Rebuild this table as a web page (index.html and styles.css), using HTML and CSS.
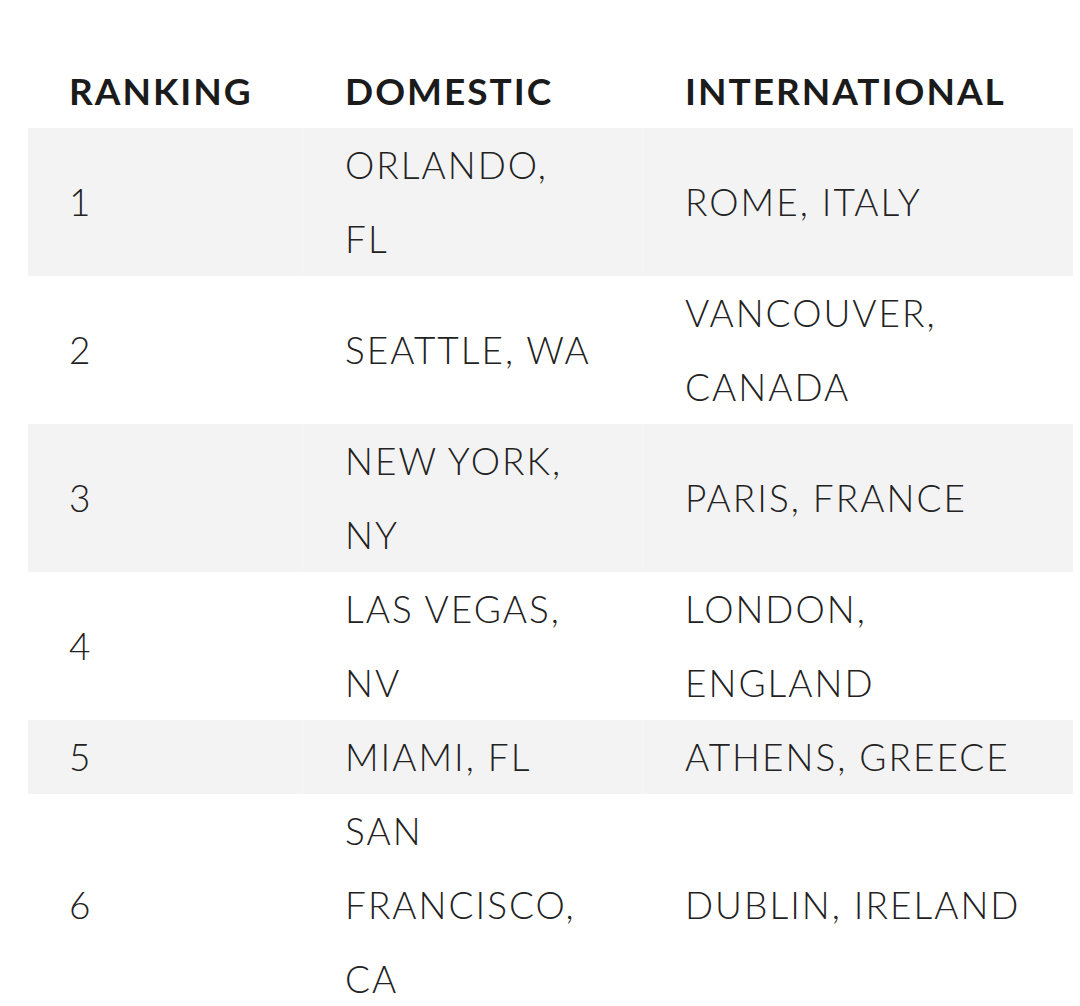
FILE: index.html
```html
<!DOCTYPE html>
<html>
<head>
<meta charset="utf-8">
<link rel="stylesheet" href="styles.css">
</head>
<body>
<div class="wrap">
<table class="rank">
  <thead>
    <tr><th class="c1">RANKING</th><th class="c2">DOMESTIC</th><th class="c3">INTERNATIONAL</th></tr>
  </thead>
  <tbody>
    <tr class="alt"><td>1</td><td>ORLANDO, FL</td><td>ROME, ITALY</td></tr>
    <tr><td>2</td><td>SEATTLE, WA</td><td>VANCOUVER, CANADA</td></tr>
    <tr class="alt"><td>3</td><td>NEW YORK, NY</td><td>PARIS, FRANCE</td></tr>
    <tr><td>4</td><td>LAS VEGAS, NV</td><td>LONDON, ENGLAND</td></tr>
    <tr class="alt"><td>5</td><td>MIAMI, FL</td><td>ATHENS, GREECE</td></tr>
    <tr><td>6</td><td>SAN FRANCISCO, CA</td><td>DUBLIN, IRELAND</td></tr>
  </tbody>
</table>
</div>
</body>
</html>
```

FILE: styles.css
```css
html, body {
  margin: 0;
  padding: 0;
  background: #ffffff;
}
.wrap {
  padding: 54px 7px 0 28px;
}
.rank {
  width: 1045px;
  border-collapse: collapse;
  table-layout: fixed;
  font-family: "Lato", "Liberation Sans", sans-serif;
  font-size: 37px;
  line-height: 74px;
  color: #222222;
}
.rank th, .rank td {
  box-sizing: border-box;
  text-align: left;
  vertical-align: middle;
  padding: 0 44px 0 41px;
}
.rank th {
  font-weight: 700;
  color: #1b1b1b;
  letter-spacing: 2px;
}
.rank td {
  font-weight: 300;
  letter-spacing: 2px;
}
.rank td + td, .rank th + th {
  padding-left: 43px;
}
.rank td + td + td, .rank th + th + th {
  padding-right: 40px;
}
.c1 { width: 274px; }
.c2 { width: 340px; }
.c3 { width: 431px; }
.rank tr.alt td {
  background: #f3f3f3;
}
.rank tr.alt td + td {
  box-shadow: inset 1px 0 0 #f6f6f6;
}
```
